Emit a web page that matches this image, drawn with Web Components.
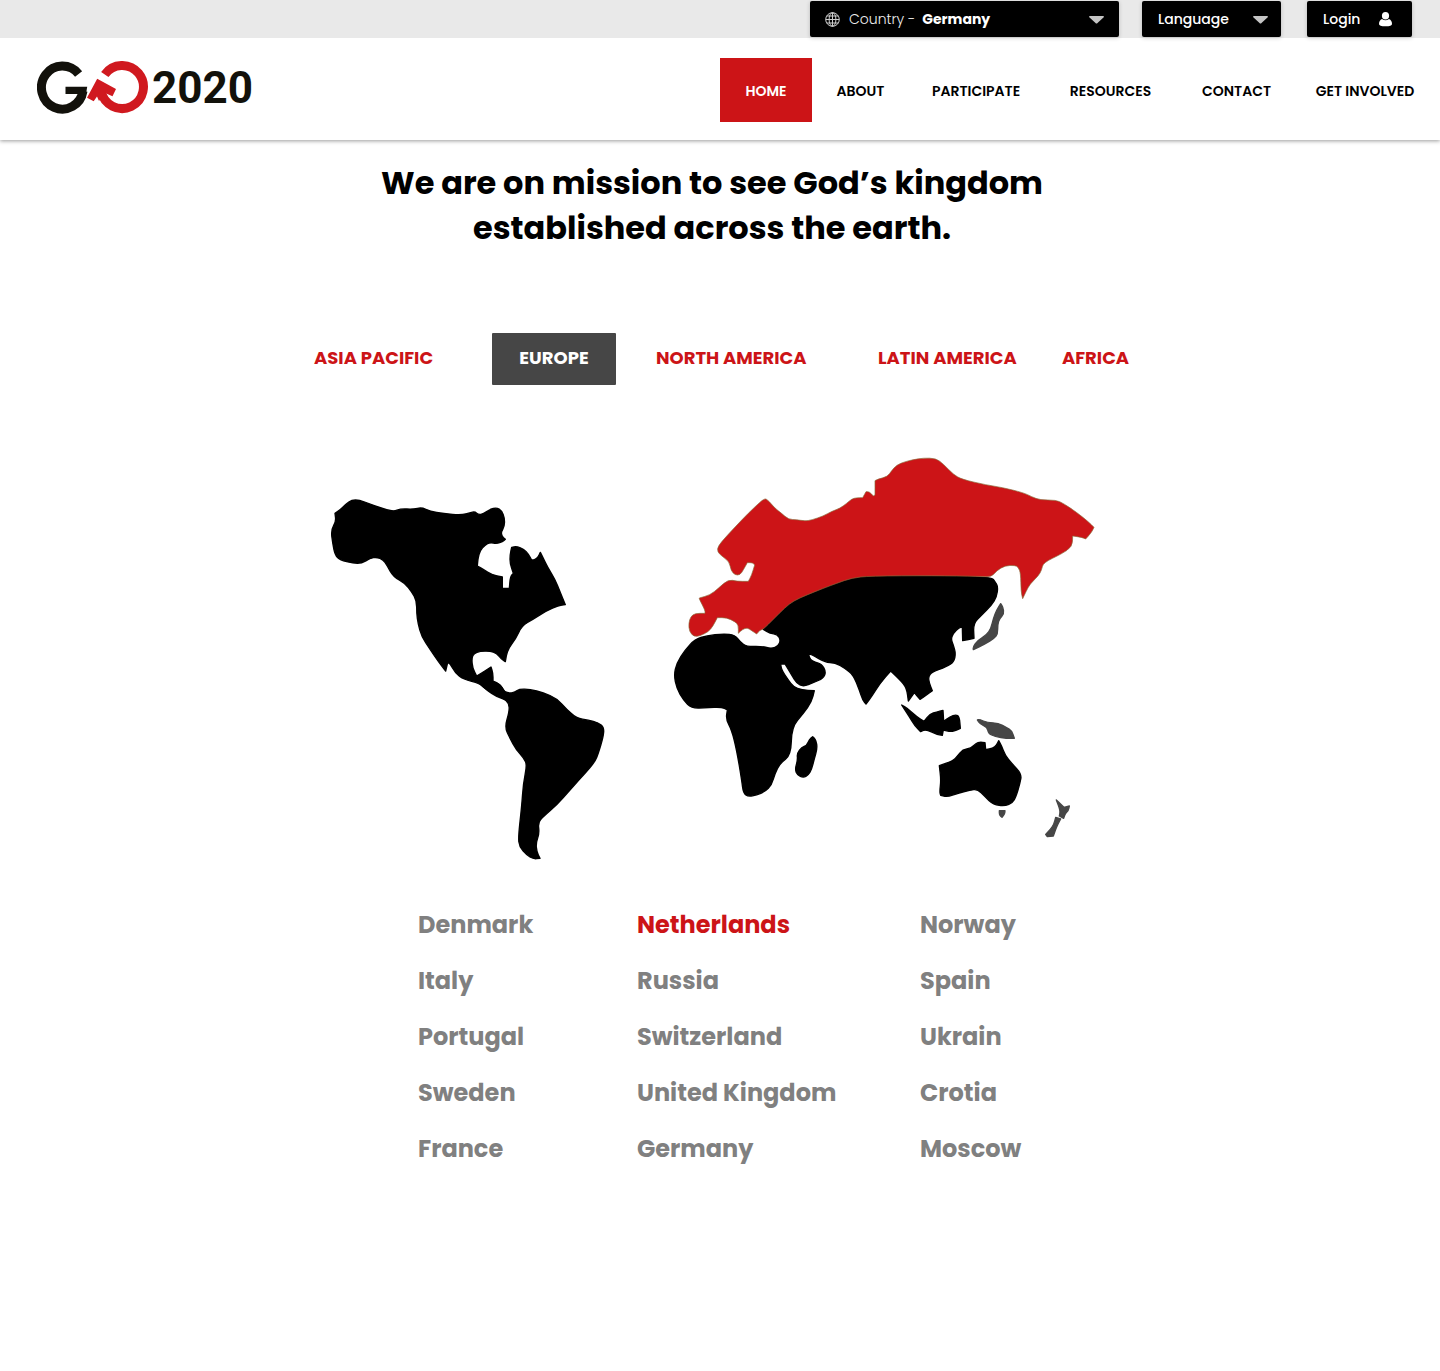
<!DOCTYPE html>
<html lang="en">
<head>
<meta charset="utf-8">
<meta name="viewport" content="width=device-width, initial-scale=1">
<title>GO 2020</title>
<style>
  body { margin: 0; background: #fff; color: #000; font-family: Poppins, Inter, "Liberation Sans", sans-serif; --red: #cc1417; }
</style>
</head>
<body>
<go-page></go-page>
<script>
const define = (name, html, setup) => customElements.define(name, class extends HTMLElement {
  constructor() {
    super();
    const t = document.createElement('template');
    t.innerHTML = html;
    this.attachShadow({ mode: 'open' }).append(t.content.cloneNode(true));
    if (setup) setup(this);
  }
});

// Rounds the shallow corners of a closed coastline and keeps the sharp ones (capes, inlets).
function smoothOutline(d) {
  const n = d.match(/-?\d+/g).map(Number), p = [];
  for (let i = 0; i < n.length; i += 2) p.push([n[i], n[i + 1]]);
  const mid = (a, b) => [(a[0] + b[0]) / 2, (a[1] + b[1]) / 2];
  let out = 'M' + mid(p[p.length - 1], p[0]);
  p.forEach((c, i) => {
    const a = p[(i || p.length) - 1], b = p[(i + 1) % p.length];
    let turn = Math.abs(Math.atan2(b[1] - c[1], b[0] - c[0]) - Math.atan2(c[1] - a[1], c[0] - a[0]));
    if (turn > Math.PI) turn = 2 * Math.PI - turn;
    out += turn < 1 ? 'Q' + c + ' ' + mid(c, b) : 'L' + c + 'L' + mid(c, b);
  });
  return out + 'Z';
}

define('go-dropdown', `
<style>
  :host { display: grid; grid-template-columns: auto auto 1fr auto; align-items: center; height: 36px; padding: 0 15px; background: #000; color: #fff; border-radius: 2px; font-size: 14px; box-shadow: 0 1px 4px #0003; box-sizing: border-box; }
  .text { padding-left: 9px; padding-right: 7px; color: #eee; font-weight: 300; }
  :host([plain]) { padding: 0 13px 0 16px; }
  :host([plain]) .text, :host([plain]) .icon { display: none; }
  select { grid-row: 1; grid-column: 3 / 5; appearance: none; border: 0; margin: 0; padding: 0; height: 36px; width: 100%; background: none; color: inherit; font: inherit; font-weight: 700; cursor: pointer; }
  :host([plain]) select { font-weight: 500; }
  option { color: #000; }
  .icon { display: flex; }
  .arrow { grid-row: 1; grid-column: 4; padding-top: 2px; pointer-events: none; }
</style>
<span class="icon"><slot name="icon"></slot></span>
<label class="text" for="s"></label>
<select id="s"></select>
<svg class="arrow" width="15" height="8" viewBox="0 0 15 8"><path d="M0 1q0-1 1-1h13q1 0 1 1L8.500 7q-1 1-2 0z" fill="#c4c4c4"/></svg>
`, el => {
  el.shadowRoot.querySelector('label').textContent = el.getAttribute('label') || '';
  const s = el.shadowRoot.querySelector('select');
  s.setAttribute('aria-label', el.getAttribute('label') || el.getAttribute('options'));
  for (const o of el.getAttribute('options').split(',')) s.add(new Option(o));
});

define('go-topbar', `
<style>
  :host { display: flex; justify-content: flex-end; align-items: center; position: relative; z-index: 1; height: 38px; padding-right: 28px; background: #e9e9e9; }
  .country { width: 309px; margin-right: 23px; }
  .lang { width: 139px; margin-right: 26px; }
  button { display: flex; align-items: center; justify-content: space-between; width: 105px; height: 36px; padding: 0 20px 0 16px; border: 0; border-radius: 2px; background: #000; color: #fff; font: inherit; font-size: 14px; font-weight: 500; box-shadow: 0 1px 4px #0003; cursor: pointer; }
</style>
<go-dropdown class="country" label="Country -" options="Germany,Netherlands,Norway">
  <svg slot="icon" width="15" height="15" viewBox="0 0 15 15" fill="none" stroke="#ccc"><circle cx="7.500" cy="7.500" r="6.800"/><ellipse cx="7.500" cy="7.500" rx="3.400" ry="6.800"/><path d="M7.500 .7v13.600M.7 7.500h13.600M1.700 4h11.600M1.700 11h11.600"/></svg>
</go-dropdown>
<go-dropdown class="lang" plain options="Language"></go-dropdown>
<button type="button">Login
  <svg width="13" height="15" viewBox="0 0 13 15" fill="#fff"><ellipse cx="6.500" cy="3.800" rx="3.600" ry="3.800"/><path d="M3 7q3.500 2.600 7 0 3 1.300 3 5 0 2.300-6.500 2.300T0 12Q0 8.300 3 7z"/></svg>
</button>
`);

define('go-logo', `
<style>
  :host { display: block; }
  a { display: flex; align-items: center; gap: 3px; color: #12110b; text-decoration: none; }
  span { font: 700 44px/52px Roboto, sans-serif; }
</style>
<a href="#">
  <svg width="112" height="54" viewBox="36 60 112 54" role="img" aria-label="GO">
    <path d="M77.600 73A20.900 21.500 0 1 0 82 90" fill="none" stroke="#12110b" stroke-width="9"/>
    <path d="M64.500 85.700H86.200L85 93H64.500z" fill="#12110b"/>
    <path d="M103.800 73.500A21.300 21.500 0 1 1 100.200 90" fill="none" stroke="#d0191f" stroke-width="9"/>
    <path d="M96.200 77.700L115 88 111.500 95.200 104 92 98 100 96 95.500 92.700 100.300 86 96.700z" fill="#d0191f"/>
  </svg>
  <span>2020</span>
</a>
`);

define('go-header', `
<style>
  :host { display: flex; justify-content: space-between; align-items: flex-start; height: 102px; box-sizing: border-box; padding: 20px 5px 0 37px; background: #fff; box-shadow: 0 1px 4px #0006; }
  go-logo { padding-top: 3px; }
  nav { display: grid; grid-template-columns: 92px 97px 134px 135px 117px 140px; height: 64px; }
  a { display: flex; align-items: center; justify-content: center; padding-top: 2px; color: #000; font-size: 14px; font-weight: 600; text-decoration: none; white-space: nowrap; }
  a[aria-current] { background: var(--red); color: #fff; }
</style>
<go-logo></go-logo>
<nav>
  <a href="#" aria-current="page">HOME</a><a href="#">ABOUT</a><a href="#">PARTICIPATE</a><a href="#">RESOURCES</a><a href="#">CONTACT</a><a href="#">GET INVOLVED</a>
</nav>
`);

define('go-regions', `
<style>
  :host { display: flex; justify-content: center; padding-left: 2px; }
  nav { display: grid; grid-template-columns: 178px 164px 222px 184px 66px; align-items: center; }
  a { justify-self: start; padding-bottom: 2px; color: var(--red); font-size: 18px; font-weight: 700; line-height: 50px; text-decoration: none; white-space: nowrap; }
  a[aria-current] { width: 124px; text-align: center; background: #464646; color: #fff; border-radius: 1px; }
</style>
<nav aria-label="Regions"><a href="#">ASIA PACIFIC</a><a href="#" aria-current="true">EUROPE</a><a href="#">NORTH AMERICA</a><a href="#">LATIN AMERICA</a><a href="#">AFRICA</a></nav>
`);

define('go-map', `
<style>
  :host { display: flex; justify-content: center; }
  svg { width: 100%; max-width: 784px; }
  path { stroke-linejoin: round; stroke-width: 4; stroke: #000; }
  .red { fill: var(--red); stroke: #8a6a3a; stroke-width: 2; }
  .grey { fill: #464646; stroke: #464646; stroke-width: 4; }
</style>
<svg viewBox="320 450 784 415" role="img" aria-label="World map with Europe highlighted">
  <g transform="translate(320 480) scale(.33333)">
    <path d="M33 150L48 125 45 100 62 88 78 72 95 60 118 60 150 72 180 83 220 95 242 86 280 88 305 82 330 94 370 101 425 105 450 98 465 95 475 104 490 102 510 88 530 83 545 92 554 115 553 140 544 155 545 168 556 178 548 185 530 191 510 187 495 195 480 212 474 235 472 258 490 268 515 284 547 291 547 325 568 325 571 290 580 280 570 250 570 225 575 202 590 199 612 208 625 222 635 240 645 240 655 230 661 217 670 235 683 262 705 298 720 335 736 374 715 377 680 392 640 417 605 438 588 475 562 510 556 545 545 538 530 520 510 513 480 514 462 520 455 535 458 565 470 588 490 576 513 561 519 580 519 603 540 613 553 633 560 660 530 650 500 630 480 610 430 598 405 578 390 550 383 548 377 573 355 545 330 508 305 470 294 430 290 400 290 362 275 335 255 310 220 290 200 255 190 240 170 231 150 235 125 250 100 250 60 240 45 225 38 190Z"/>
  </g>
  <g transform="translate(460 650) scale(.33333)">
    <path d="M60 95L100 95 120 103 133 125 150 130 165 126 178 117 210 118 250 128 290 145 320 178 350 205 385 210 415 218 432 232 430 260 415 310 405 335 375 370 330 420 290 465 250 500 234 517 238 550 228 578 230 605 240 625 220 627 200 615 178 590 175 560 185 470 190 400 201 345 192 325 168 298 150 265 134 232 148 185 147 160 130 145 80 120 60 102Z"/>
  </g>
  <g transform="translate(660 440) scale(.33333)">
    <path d="M310 568L340 538 375 503 400 483 440 465 490 445 530 430 575 414 630 408 820 407 995 411 1005 425 1014 440 1010 470 995 495 965 525 940 550 942 595 908 602 907 562 898 562 880 580 873 597 880 615 887 640 882 665 860 680 815 697 805 710 808 730 817 752 800 765 780 778 763 758 745 783 740 745 725 725 692 693 660 730 635 770 618 792 608 780 598 750 580 705 555 685 525 668 495 667 455 643 446 643 450 658 465 667 485 672 498 695 490 715 460 728 430 740 410 730 395 705 375 672 362 672 365 690 385 720 400 740 425 750 463 752 455 785 430 820 395 862 393 945 360 970 345 1000 335 1035 315 1055 290 1065 265 1070 250 1060 245 1020 230 930 215 870 198 838 202 810 185 801 140 803 95 805 70 780 50 745 42 705 50 670 75 630 105 598 140 587 190 581 225 585 240 605 260 620 305 619 335 626 355 618 362 600 352 583 330 580Z"/>
    <path class="red" d="M102 590L88 575 86 550 92 530 105 520 135 520 135 510 118 478 118 474 150 465 175 445 205 418 230 424 265 424 275 405 284 375 278 368 262 368 250 390 240 405 225 405 213 392 208 365 185 348 172 335 174 318 200 288 245 240 285 200 312 176 322 178 345 205 365 220 385 238 410 239 435 243 455 240 490 228 515 214 540 205 560 190 575 177 590 173 608 173 618 155 628 155 640 168 645 165 645 122 655 117 682 110 695 92 710 75 735 65 760 59 790 54 828 55 850 72 880 103 905 118 980 135 1025 142 1090 158 1115 170 1140 180 1188 180 1210 190 1250 217 1285 245 1302 262 1295 277 1277 297 1265 292 1238 288 1237 320 1205 342 1150 368 1145 390 1135 408 1110 432 1098 455 1088 476 1083 455 1082 400 1075 382 1065 376 1035 377 1010 392 995 411 960 409 820 407 630 408 575 414 530 430 490 445 440 465 400 483 375 503 340 538 310 568 300 570 290 582 275 572 262 563 248 568 235 580 235 555 225 545 200 533 172 533 158 560 145 575 120 588Z"/>
  </g>
  <g transform="translate(660 620) scale(.33333)">
    <path d="M458 350L468 360 472 385 462 420 455 448 445 465 430 473 412 465 405 448 413 420 411 400 425 382 440 377 448 358Z"/>
  </g>
  <g transform="translate(870 620) scale(.33333)">
    <path d="M95 255L112 265 140 290 162 304 180 282 200 276 219 271 221 304 240 290 258 284 268 290 271 325 255 333 240 335 220 330 217 346 200 343 168 328 152 335 135 318 118 290Z"/>
    <path d="M208 437L250 422 262 408 278 389 303 385 318 370 330 366 345 368 347 389 368 385 380 375 386 362 395 378 405 405 425 430 455 462 450 490 438 530 428 548 405 558 370 554 345 530 322 507 300 511 268 518 232 531 212 526 209 515 213 480Z"/>
    <path class="grey" d="M322 300L328 298 352 308 385 309 410 323 425 332 433 355 410 355 375 350 355 340 352 322 330 312Z"/>
    <path class="grey" d="M388 572L405 572 404 582 396 592 388 586Z"/>
    <path class="grey" d="M559 540L572 552 582 562 598 558 595 572 586 580 581 595 568 588 571 572Z"/>
    <path class="grey" d="M557 592L572 597 564 612 558 625 550 648 532 650 527 643 542 627 552 612Z"/>
  </g>
  <g transform="translate(880 440) scale(.33333)">
    <path class="grey" d="M362 491L369 501 372 522 359 535 353 553 353 582 343 595 315 612 280 629 279 621 292 602 320 585 333 565 340 535 350 510Z"/>
  </g>
</svg>
`, el => {
  for (const p of el.shadowRoot.querySelectorAll('path')) p.setAttribute('d', smoothOutline(p.getAttribute('d')));
});

define('go-countries', `
<style>
  :host { display: flex; justify-content: center; }
  ul { display: grid; grid-template-columns: 219px 283px 102px; grid-auto-rows: 56px; align-items: center; margin: 0; padding: 0; list-style: none; }
  a { color: #808080; font-size: 24px; font-weight: 700; text-decoration: none; white-space: nowrap; }
  a[aria-current] { color: var(--red); }
</style>
<ul>
  <li><a href="#">Denmark</a></li><li><a href="#" aria-current="true">Netherlands</a></li><li><a href="#">Norway</a></li>
  <li><a href="#">Italy</a></li><li><a href="#">Russia</a></li><li><a href="#">Spain</a></li>
  <li><a href="#">Portugal</a></li><li><a href="#">Switzerland</a></li><li><a href="#">Ukrain</a></li>
  <li><a href="#">Sweden</a></li><li><a href="#">United Kingdom</a></li><li><a href="#">Crotia</a></li>
  <li><a href="#">France</a></li><li><a href="#">Germany</a></li><li><a href="#">Moscow</a></li>
</ul>
`);

define('go-page', `
<style>
  :host { display: block; padding-bottom: 193px; }
  h1 { max-width: 720px; margin: 0 auto; padding: 20px 16px 0 0; text-align: center; font-size: 32px; font-weight: 700; line-height: 45px; }
  go-regions { margin-top: 83px; }
  go-map { margin-top: 65px; padding-right: 16px; }
  go-countries { margin-top: 31px; }
</style>
<go-topbar></go-topbar>
<go-header></go-header>
<main>
  <h1>We are on mission to see God’s kingdom established across the earth.</h1>
  <go-regions></go-regions>
  <go-map></go-map>
  <go-countries></go-countries>
</main>
`);
</script>
</body>
</html>
